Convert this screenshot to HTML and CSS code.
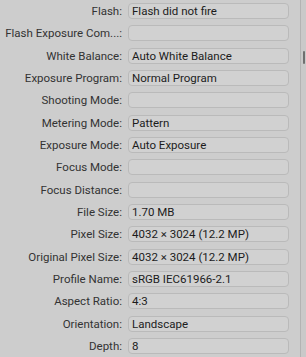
FILE: index.html
```
<!DOCTYPE html>
<html lang="en">
<head>
    <meta charset="UTF-8">
    <meta name="viewport" content="width=device-width, initial-scale=1.0">
    <title>Info</title>
    <link rel="stylesheet" href="styles.css">
</head>
<body>
    <div class="panel">
        <div class="rows">
            <div class="row"><span class="label">Flash:</span><span class="field">Flash did not fire</span></div>
            <div class="row"><span class="label">Flash Exposure Com...:</span><span class="field"></span></div>
            <div class="row"><span class="label">White Balance:</span><span class="field">Auto White Balance</span></div>
            <div class="row"><span class="label">Exposure Program:</span><span class="field">Normal Program</span></div>
            <div class="row"><span class="label">Shooting Mode:</span><span class="field"></span></div>
            <div class="row"><span class="label">Metering Mode:</span><span class="field">Pattern</span></div>
            <div class="row"><span class="label">Exposure Mode:</span><span class="field">Auto Exposure</span></div>
            <div class="row"><span class="label">Focus Mode:</span><span class="field"></span></div>
            <div class="row"><span class="label">Focus Distance:</span><span class="field"></span></div>
            <div class="row"><span class="label">File Size:</span><span class="field">1.70 MB</span></div>
            <div class="row"><span class="label">Pixel Size:</span><span class="field">4032 × 3024 (12.2 MP)</span></div>
            <div class="row"><span class="label">Original Pixel Size:</span><span class="field">4032 × 3024 (12.2 MP)</span></div>
            <div class="row"><span class="label">Profile Name:</span><span class="field">sRGB IEC61966-2.1</span></div>
            <div class="row"><span class="label">Aspect Ratio:</span><span class="field">4:3</span></div>
            <div class="row"><span class="label">Orientation:</span><span class="field">Landscape</span></div>
            <div class="row"><span class="label">Depth:</span><span class="field">8</span></div>
        </div>
        <div class="scrollbar"><span class="thumb"></span></div>
    </div>
</body>
</html>
```

FILE: styles.css
```
body {
    margin: 0;
    padding: 0;
    background-color: #cdcdcd;
    font-family: Roboto, "Liberation Sans", sans-serif;
    font-size: 11.5px;
    color: #2a2a2a;
}

.panel {
    display: flex;
    height: 357px;
    overflow: hidden;
}

.rows {
    flex: 1;
    padding-top: 3px;
    display: flex;
    flex-direction: column;
    gap: 6.33px;
}

.row {
    display: flex;
    align-items: center;
    height: 16px;
}

.label {
    width: 122px;
    text-align: right;
    color: #333;
    white-space: nowrap;
}

.field {
    box-sizing: border-box;
    margin-left: 6px;
    width: 161px;
    height: 16px;
    padding: 0 3px;
    line-height: 14px;
    border: 1px solid #bababa;
    border-radius: 4px;
    background-color: #d1d1d1;
    color: #1c1c1c;
    white-space: nowrap;
}

.scrollbar {
    width: 5px;
    border-left: 1px solid #b3b3b3;
    background-color: #c9c9c9;
    position: relative;
}

.thumb {
    position: absolute;
    top: 51px;
    left: 2px;
    width: 2px;
    height: 13px;
    background-color: #6f6f6f;
    border-radius: 1px;
}
```
